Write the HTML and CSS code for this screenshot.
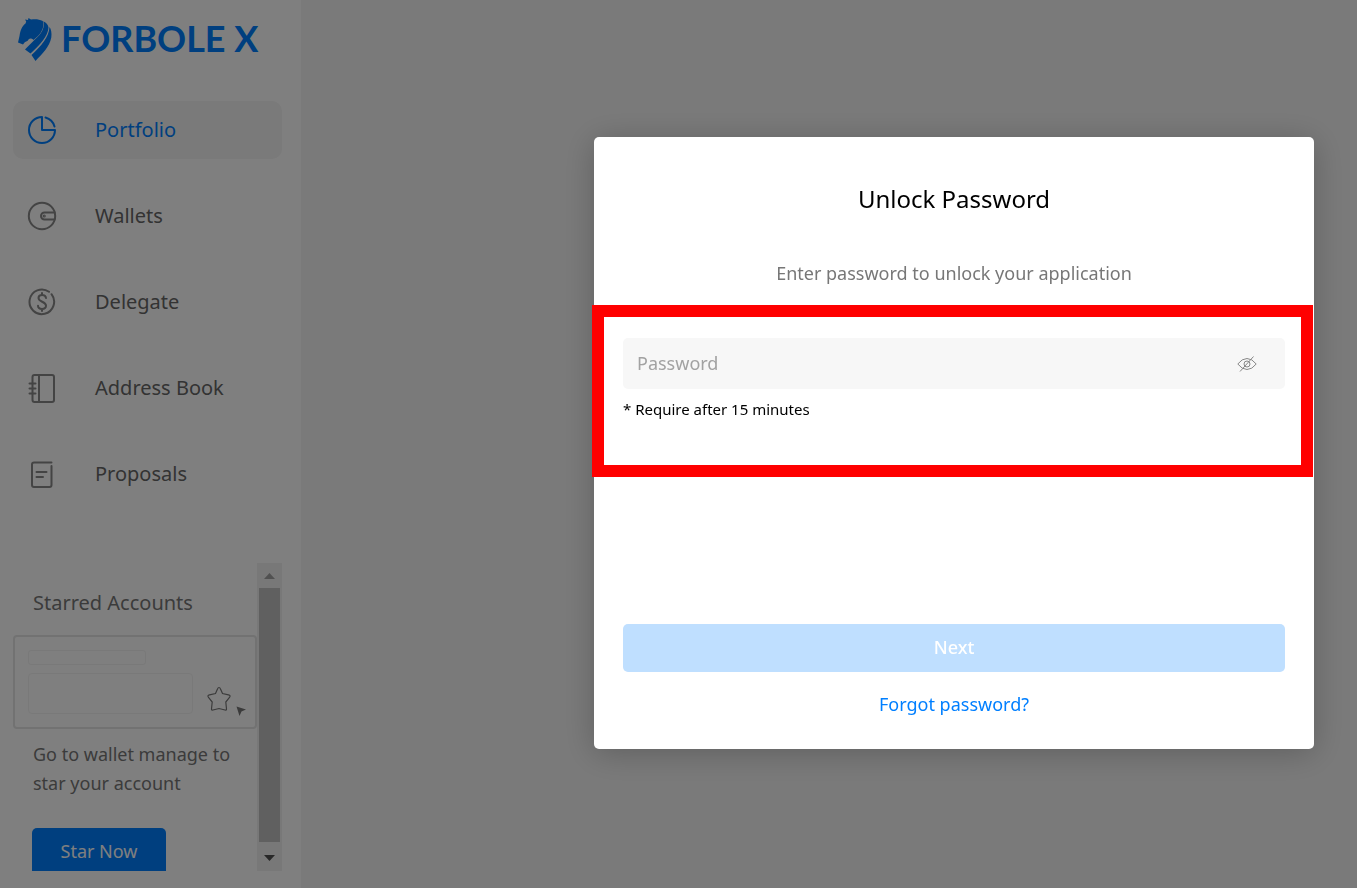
FILE: index.html
```html
<!DOCTYPE html>
<html lang="en">
<head>
    <meta charset="UTF-8">
    <title>Forbole X</title>

    <link rel="stylesheet" href="styles.css">
</head>
<body>

<div class="page">
    <aside class="sidebar">
        <a href="#" class="logo">
            <svg class="logo__icon" width="34" height="43" viewBox="0 0 34 43" fill="currentColor">
                <path d="M0 24.500 L1.500 18 C2.500 12 4 8 7.500 5.500 L8.200 3.500 L7 1.500 L10 2 L10.500 0 L13 1.500 C17 .8 21 1 24.800 3 C26.500 8 24 14 20 18 L15.500 22 C14 20.500 12 20 10.500 21.500 C9.500 23.500 8 23.500 7 24 L5 26.500 Z"/>
                <path d="M25.300 3.200 C28.500 4.500 30.300 7 30.500 9.500 C30 18 22 27 12.500 35.500 L7 31.500 C11 27 16 22.500 19.500 19 C24.500 14 27 8.500 25.300 3.200 Z"/>
                <path d="M31.500 9 C33 11 34 15 33.300 19.500 C31.500 29 24 36 17.500 43 L13.500 37 C23 28 31 19.500 31.500 9 Z"/>
            </svg>
            <span class="logo__text">FORBOLE X</span>
        </a>

        <nav class="nav">
            <a href="#" class="nav__item nav__item--active">
                <svg class="nav__icon" viewBox="0 0 30 30">
                    <path d="M15 2 A13 13 0 1 0 28 15 H15 Z"/>
                    <path d="M18.500 2.500 A13 13 0 0 1 27.500 11.500"/>
                </svg>
                <span class="nav__label">Portfolio</span>
            </a>
            <a href="#" class="nav__item">
                <svg class="nav__icon" viewBox="0 0 30 30">
                    <circle cx="15" cy="15" r="13.200"/>
                    <path d="M27.500 11.500 H17.500 A3.500 3.500 0 0 0 17.500 18.500 H27.500"/>
                    <circle cx="17.200" cy="15" r=".6"/>
                </svg>
                <span class="nav__label">Wallets</span>
            </a>
            <a href="#" class="nav__item">
                <svg class="nav__icon" viewBox="0 0 30 30">
                    <path d="M22 4.800 A12.300 12.300 0 1 0 24.500 7.200"/>
                    <path d="M19 11 C18.500 7 11.500 7 11.500 11 C11.500 15 19 14.500 19 18.800 C19 23 11 23 11 18.800 M15 6 V8 M15 22 V24"/>
                </svg>
                <span class="nav__label">Delegate</span>
            </a>
            <a href="#" class="nav__item">
                <svg class="nav__icon" viewBox="0 0 30 30">
                    <rect x="5.500" y="2" width="21.500" height="27" rx="2"/>
                    <path d="M12 2 V29 M2.500 10.500 H8.500 M2.500 15.500 H8.500 M2.500 20.500 H8.500"/>
                </svg>
                <span class="nav__label">Address Book</span>
            </a>
            <a href="#" class="nav__item">
                <svg class="nav__icon" viewBox="0 0 30 30">
                    <path d="M24.500 3.500 H7 Q5 3.500 5 5.500 V26 Q5 28 7 28 H22.500 Q24.500 28 24.500 26 V7"/>
                    <path d="M9.500 13 H19.500 M9.500 18 H16"/>
                </svg>
                <span class="nav__label">Proposals</span>
            </a>
        </nav>

        <section class="starred">
            <div class="starred__content">
                <h2 class="starred__title">Starred Accounts</h2>
                <div class="card">
                    <div class="card__lines">
                        <div class="card__line"></div>
                        <div class="card__block"></div>
                    </div>
                    <svg class="card__star" width="40" height="32" viewBox="0 0 40 32">
                        <path class="star" d="M13 2.500 Q14 2.500 14.500 4 L16.500 8.500 L22.500 9.800 Q25 10.500 23.500 12.500 L19.800 17 L20.500 24 Q20.500 25.500 19 25 L13 23.500 L7 25 Q5.500 25.500 5.500 24 L6.200 17 L2.500 12.500 Q1 10.500 3.500 9.800 L9.500 8.500 L11.500 4 Q12 2.500 13 2.500 Z"/>
                        <path class="cursor" d="M30.500 21.500 L40 24.500 L35.500 26.500 L33.500 31 Z"/>
                    </svg>
                </div>
                <p class="starred__text">Go to wallet manage to star your account</p>
                <button type="button" class="btn starred__btn">Star Now</button>
            </div>
            <div class="scroll">
                <svg class="scroll__arrow" viewBox="0 0 25 25"><path fill="#a3a3a3" d="M7 16 L12.500 10 L18 16 Z"/></svg>
                <div class="scroll__thumb"></div>
                <svg class="scroll__arrow scroll__arrow--down" viewBox="0 0 25 25"><path fill="#505050" d="M7 9 L12.500 15 L18 9 Z"/></svg>
            </div>
        </section>
    </aside>
    <main class="main"></main>
</div>

<div class="overlay">
    <form action="#" class="modal" role="dialog" aria-labelledby="modal-title">
        <h1 class="modal__title" id="modal-title">Unlock Password</h1>
        <p class="modal__text">Enter password to unlock your application</p>
        <div class="field">
            <div class="field__box">
                <input type="password" class="field__input" placeholder="Password" aria-label="Password">
                <button type="button" class="field__toggle" aria-label="Show password">
                    <svg width="20" height="16" viewBox="0 0 20 16">
                        <path d="M.8 8 Q5 2.500 10 2.500 Q15 2.500 19.200 8 Q15 13.500 10 13.500 Q5 13.500 .8 8 Z M3 15.500 L16.500 .5"/>
                        <circle cx="10" cy="8" r="3"/>
                    </svg>
                </button>
            </div>
            <p class="field__hint">* Require after 15 minutes</p>
        </div>
        <button type="submit" class="btn modal__btn" disabled>Next</button>
        <a href="#" class="modal__link">Forgot password?</a>
    </form>
</div>

</body>
</html>
```
FILE: styles.css
```css
*{
    box-sizing: border-box;
}
body{
    margin: 0;
    font-family: "Noto Sans", "Open Sans", sans-serif;
    font-size: 18px;
    color: #000;
}
h1, h2, p{
    margin: 0;
    font-weight: 400;
}
a{
    text-decoration: none;
}
.page{
    display: flex;
    height: 100vh;
}
.main{
    flex: 1;
    background-color: #f4f4f4;
}

/* sidebar */
.sidebar{
    display: flex;
    flex-direction: column;
    width: 301px;
    padding: 18px 19px 17px 13px;
    background-color: #fff;
}
.logo{
    display: flex;
    align-items: center;
    gap: 9px;
    height: 43px;
    padding-left: 5px;
    color: #007fff;
}
.logo__text{
    padding-bottom: 2px;
    font-family: Lato, sans-serif;
    font-size: 36px;
    font-weight: 700;
    line-height: 43px;
    white-space: nowrap;
}
.nav{
    display: flex;
    flex-direction: column;
    gap: 28px;
    margin-top: 40px;
}
.nav__item{
    display: flex;
    align-items: center;
    gap: 38px;
    height: 58px;
    padding-left: 14px;
    border-radius: 10px;
    font-size: 20px;
    color: #666;
}
.nav__item--active{
    background-color: #f4f4f4;
    color: #007fff;
}
.nav__label{
    padding-bottom: 2px;
}
.nav__icon{
    width: 30px;
    height: 30px;
    fill: none;
    stroke: #888;
    stroke-width: 2;
    stroke-linecap: round;
    stroke-linejoin: round;
}
.nav__item--active .nav__icon{
    stroke: #007fff;
}

/* starred accounts */
.starred{
    display: flex;
    flex: 1;
    min-height: 0;
    margin-top: 60px;
}
.starred__content{
    flex: 1;
    overflow: hidden;
}
.starred__title{
    padding: 24px 20px 16px;
    font-size: 20px;
    line-height: 32px;
    white-space: nowrap;
    color: #777;
}
.card{
    display: flex;
    justify-content: space-between;
    align-items: flex-end;
    height: 94px;
    padding: 13px 9px 10px;
    border: 2px solid #e4e4e4;
    border-radius: 4px;
}
.card__lines{
    padding: 0 0 3px 4px;
}
.card__line{
    width: 118px;
    height: 15px;
    border: 1px solid #f2f2f2;
    border-radius: 3px;
}
.card__block{
    width: 165px;
    height: 41px;
    margin-top: 8px;
    border: 1px solid #f2f2f2;
    border-radius: 4px;
}
.star{
    fill: none;
    stroke: #777;
    stroke-width: 1.2;
}
.cursor{
    fill: #777;
}
.starred__text{
    padding: 11px 16px 0 20px;
    line-height: 29px;
    color: #777;
}
.btn{
    height: 48px;
    padding: 0 0 2px;
    border: none;
    border-radius: 5px;
    background-color: #007fff;
    color: #fff;
    font-family: inherit;
    font-size: 18px;
    cursor: pointer;
}
.starred__btn{
    width: 134px;
    margin: 30px 0 0 19px;
}
.scroll{
    display: flex;
    flex-direction: column;
    width: 25px;
    background-color: #f1f1f1;
}
.scroll__arrow{
    width: 25px;
    height: 25px;
}
.scroll__arrow--down{
    margin-top: 4px;
}
.scroll__thumb{
    flex: 1;
    margin: 0 2px;
    background-color: #c1c1c1;
}

/* modal */
.overlay{
    position: fixed;
    top: 0;
    right: 0;
    bottom: 0;
    left: 0;
    display: flex;
    justify-content: flex-end;
    align-items: center;
    padding: 0 43px 2px 0;
    background-color: rgba(0, 0, 0, .5);
}
.modal{
    display: flex;
    flex-direction: column;
    width: 720px;
    padding: 42px 29px 30px;
    border-radius: 5px;
    background-color: #fff;
    box-shadow: 0 4px 32px rgba(0, 0, 0, .22);
    text-align: center;
}
.modal__title{
    font-size: 24px;
    line-height: 40px;
}
.modal__text{
    margin-top: 39px;
    line-height: 30px;
    color: #777;
}
.field{
    position: relative;
    height: 139px;
    margin: 50px 0 147px;
    text-align: left;
}
.field::after{
    content: '';
    position: absolute;
    top: -33px;
    right: -28px;
    bottom: 0;
    left: -31px;
    border: 12px solid #f00;
    pointer-events: none;
}
.field__box{
    display: flex;
    align-items: center;
    height: 51px;
    padding: 0 28px 0 14px;
    border-radius: 5px;
    background-color: #f7f7f7;
}
.field__input{
    flex: 1;
    padding: 0 0 2px;
    border: none;
    outline: none;
    background: none;
    font-family: inherit;
    font-size: 18px;
}
.field__input::placeholder{
    color: #a2a2a2;
}
.field__toggle{
    display: flex;
    padding: 0;
    border: none;
    background: none;
    cursor: pointer;
}
.field__toggle svg{
    fill: none;
    stroke: #888;
}
.field__hint{
    margin-top: 8px;
    font-size: 15px;
    line-height: 24px;
}
.modal__btn:disabled{
    background-color: #bfdfff;
    font-weight: 500;
    cursor: default;
}
.modal__link{
    margin-top: 17px;
    line-height: 30px;
    color: #007fff;
}
```
